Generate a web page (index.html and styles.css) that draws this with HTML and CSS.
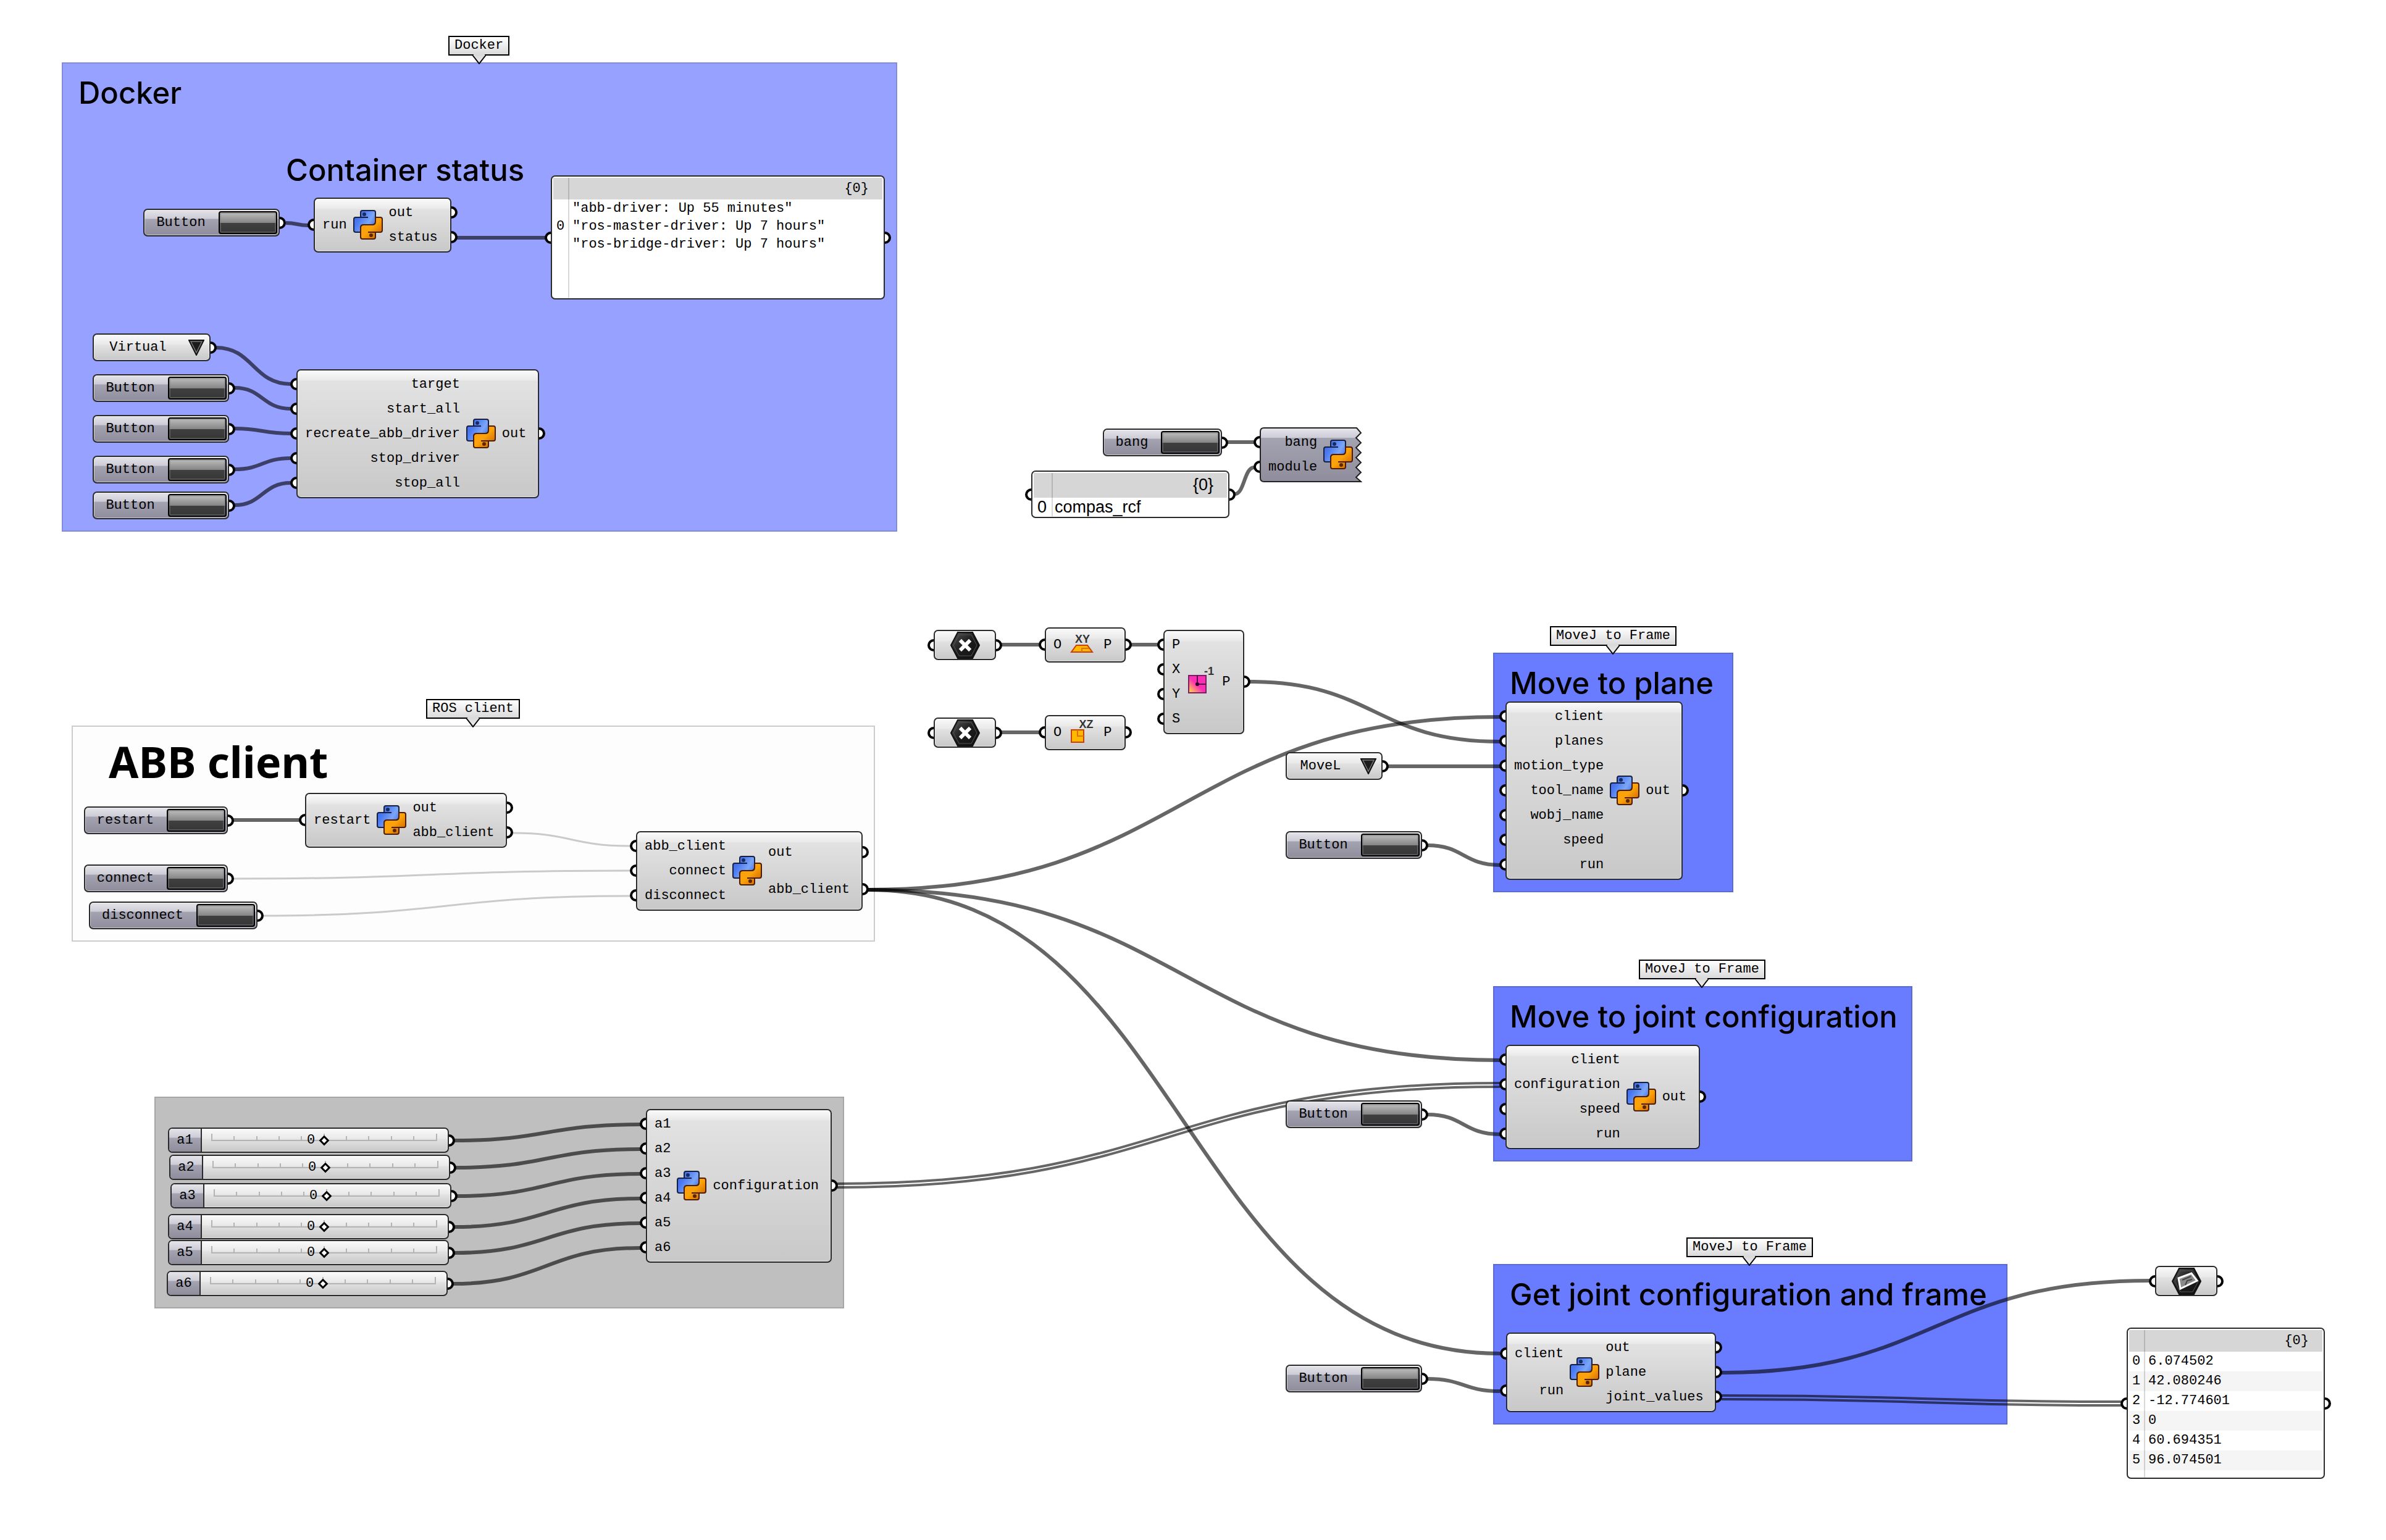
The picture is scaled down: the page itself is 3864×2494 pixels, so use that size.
FILE: index.html
```html
<!DOCTYPE html>
<html lang="en">
<head>
<meta charset="utf-8">
<title>ABB robot control definition</title>
<link rel="stylesheet" href="styles.css">
</head>
<body>
<svg class="defs" aria-hidden="true">
  <defs>
    <linearGradient id="blue" x1="0" y1="0" x2="1" y2="0.6"><stop offset="0" stop-color="#3e63e6"/><stop offset="0.35" stop-color="#4a78f0"/><stop offset="0.75" stop-color="#7ba6f8"/><stop offset="1" stop-color="#4f7ce8"/></linearGradient>
    <linearGradient id="orange" x1="0" y1="0" x2="1" y2="1"><stop offset="0" stop-color="#ff9d0a"/><stop offset="0.5" stop-color="#fba30a"/><stop offset="1" stop-color="#c35400"/></linearGradient>
    <linearGradient id="dark" x1="0" y1="0" x2="1" y2="1"><stop offset="0" stop-color="#555"/><stop offset="0.5" stop-color="#1c1c1c"/><stop offset="1" stop-color="#111"/></linearGradient>
    <linearGradient id="magenta" x1="0" y1="1" x2="0.6" y2="0.4"><stop offset="0" stop-color="#ffe83a"/><stop offset="0.8" stop-color="#fb2fb4"/></linearGradient>
    <linearGradient id="lilac" x1="0" y1="0" x2="0" y2="1"><stop offset="0" stop-color="#e6e6ec"/><stop offset="0.18" stop-color="#cdccd6"/><stop offset="0.19" stop-color="#a4a3b1"/><stop offset="1" stop-color="#8f8d9b"/></linearGradient>
    <linearGradient id="tip" x1="0" y1="0" x2="0" y2="1"><stop offset="0" stop-color="#dadada"/><stop offset="1" stop-color="#eee"/></linearGradient>
  </defs>
  <symbol id="python" viewBox="0 0 48 48">
    <path d="M12 36H4q-3 0-3-3V15q0-3 3-3h8V4q0-3 3-3h18q3 0 3 3v15q0 5-5 5H17q-5 0-5 5z" fill="url(#blue)" stroke="#17203f" stroke-width="2" stroke-linejoin="round"/>
    <path d="M12 12h12" stroke="#17203f" stroke-width="2"/>
    <path d="M36 12h8q3 0 3 3v18q0 3-3 3h-8v8q0 3-3 3H15q-3 0-3-3V29q0-5 5-5h14q5 0 5-5z" fill="url(#orange)" stroke="#4d1c05" stroke-width="2" stroke-linejoin="round"/>
    <path d="M36 36H24" stroke="#4d1c05" stroke-width="2"/>
    <circle cx="18" cy="7" r="3" fill="#1b2a5c"/><circle cx="29" cy="41" r="3" fill="#5a2604"/>
  </symbol>
  <symbol id="point" viewBox="0 0 48 44">
    <path d="M1 22 12 1h24l11 21-11 21H12z" fill="url(#dark)" stroke="#111" stroke-width="2"/>
    <path d="M5 22 14 5h20l9 17-9 17H14z" fill="none" stroke="#555" stroke-width="1"/>
    <path d="M18 16l12 12M30 16 18 28" stroke="#fff" stroke-width="6" stroke-linecap="square"/>
  </symbol>
  <symbol id="planeparam" viewBox="0 0 48 44">
    <path d="M1 22 12 1h24l11 21-11 21H12z" fill="url(#dark)" stroke="#111" stroke-width="2"/>
    <path d="M5 22 14 5h20l9 17-9 17H14z" fill="none" stroke="#555" stroke-width="1"/>
    <path d="M11 17 32 9l9 12-27 13z" fill="#8a8a8a" stroke="#fff" stroke-width="3"/>
    <path d="M17 20l14-6M22 28l3-7 8-2" fill="none" stroke="#444" stroke-width="2"/>
  </symbol>
  <symbol id="ruler" viewBox="0 0 366 24">
    <path d="M0 12H366M1 1v11M37 5v7M74 5v7M110 5v7M146 5v7M183 1v11M219 5v7M255 5v7M292 5v7M328 5v7M365 1v11" fill="none" stroke="#b4b4b4" stroke-width="2"/>
  </symbol>
  <symbol id="arrow" viewBox="0 0 26 26">
    <path d="M1 1h24L13 25z" fill="#1c1c1c" stroke="#111" stroke-width="2"/>
    <path d="M4 3h18l-9 18z" fill="none" stroke="#777" stroke-width="1.5"/>
  </symbol>
  <symbol id="tail" viewBox="0 0 22 16">
    <path d="M0 1 11 15 22 1" fill="url(#tip)" stroke="#000" stroke-width="2"/>
    <path d="M2 1h18" stroke="#dadada" stroke-width="3"/>
  </symbol>
</svg>

<main class="canvas">
  <section class="group docker" id="g-docker"><h2>Docker</h2></section>
  <section class="group client" id="g-client"><h1>ABB client</h1></section>
  <section class="group grey" id="g-axes"></section>
  <section class="group move" id="g-plane"><h2>Move to plane</h2></section>
  <section class="group move" id="g-joint"><h2>Move to joint configuration</h2></section>
  <section class="group move" id="g-get"><h2>Get joint configuration and frame</h2></section>
  <h2 id="status-title">Container status</h2>

  <svg class="wires" aria-hidden="true">
    <g class="wire">
      <path d="M463 361C481 361 481 365 499 365"/>
      <path d="M740 385H883"/>
      <path d="M350 563C410 563 410 622 471 622"/>
      <path d="M380 628C425 628 425 662 471 662"/>
      <path d="M380 694C425 694 425 702 471 702"/>
      <path d="M380 760C425 760 425 742 471 742"/>
      <path d="M380 818C425 818 425 782 471 782"/>
      <path d="M1988 716H2031"/>
      <path d="M2000 800C2015 800 2015 757 2031 757"/>
      <path d="M1622 1044H1683"/>
      <path d="M1622 1186H1683"/>
      <path d="M1832 1044H1875"/>
      <path d="M2024 1104C2226 1104 2226 1201 2429 1201"/>
      <path d="M2248 1241H2429"/>
      <path d="M2312 1369C2370 1369 2370 1401 2429 1401"/>
      <path d="M2312 1805C2370 1805 2370 1837 2429 1837"/>
      <path d="M2312 2233C2370 2233 2370 2253 2429 2253"/>
      <path d="M378 1328H486"/>
      <path d="M1406 1441C1917 1441 1917 1161 2429 1161"/>
      <path d="M1406 1441C1917 1441 1917 1717 2429 1717"/>
      <path d="M1406 1441C1917 1441 1917 2192 2429 2192"/>
      <path d="M736 1847C886 1847 886 1821 1037 1821"/>
      <path d="M738 1891C887 1891 887 1861 1037 1861"/>
      <path d="M740 1937C888 1937 888 1901 1037 1901"/>
      <path d="M736 1987C886 1987 886 1941 1037 1941"/>
      <path d="M736 2029C886 2029 886 1981 1037 1981"/>
      <path d="M734 2079C885 2079 885 2021 1037 2021"/>
      <path d="M2788 2223C3134 2223 3134 2074 3481 2074"/>
    </g>
    <g class="wire list">
      <path d="M1356 1917C1892 1917 1892 1754 2429 1754"/>
      <path d="M1356 1923C1892 1923 1892 1760 2429 1760"/>
      <path d="M2788 2260C3111 2260 3111 2270 3435 2270"/>
      <path d="M2788 2266C3111 2266 3111 2276 3435 2276"/>
    </g>
    <g class="wire empty">
      <path d="M830 1349C925 1349 925 1370 1021 1370"/>
      <path d="M378 1423C699 1423 699 1410 1021 1410"/>
      <path d="M426 1483C723 1483 723 1451 1021 1451"/>
    </g>
  </svg>

  <div class="tag" id="t-docker"><span>Docker</span><svg><use href="#tail"/></svg></div>
  <div class="tag" id="t-ros"><span>ROS client</span><svg><use href="#tail"/></svg></div>
  <div class="tag" id="t-plane"><span>MoveJ to Frame</span><svg><use href="#tail"/></svg></div>
  <div class="tag" id="t-joint"><span>MoveJ to Frame</span><svg><use href="#tail"/></svg></div>
  <div class="tag" id="t-get"><span>MoveJ to Frame</span><svg><use href="#tail"/></svg></div>

  <div class="box trigger out" id="b-status"><span id="l-status">Button</span><button type="button" aria-labelledby="l-status"></button></div>
  <div class="box node" id="n-status">
    <ul class="inputs"><li>run</li></ul><svg class="icon"><use href="#python"/></svg><ul class="outputs"><li>out</li><li>status</li></ul>
  </div>
  <div class="box panel in out" id="p-status">
    <table>
      <thead><tr><th></th><th>{0}</th></tr></thead>
      <tbody><tr><td>0</td><td>"abb-driver: Up 55 minutes"<br>"ros-master-driver: Up 7 hours"<br>"ros-bridge-driver: Up 7 hours"</td></tr></tbody>
    </table>
  </div>

  <div class="box dropdown out" id="s-target"><select aria-label="target"><option>Virtual</option></select><svg><use href="#arrow"/></svg></div>
  <div class="box trigger out" id="b-start"><span id="l-start">Button</span><button type="button" aria-labelledby="l-start"></button></div>
  <div class="box trigger out" id="b-recreate"><span id="l-recreate">Button</span><button type="button" aria-labelledby="l-recreate"></button></div>
  <div class="box trigger out" id="b-stopdriver"><span id="l-stopdriver">Button</span><button type="button" aria-labelledby="l-stopdriver"></button></div>
  <div class="box trigger out" id="b-stopall"><span id="l-stopall">Button</span><button type="button" aria-labelledby="l-stopall"></button></div>
  <div class="box node" id="n-docker">
    <ul class="inputs"><li>target</li><li>start_all</li><li>recreate_abb_driver</li><li>stop_driver</li><li>stop_all</li></ul><svg class="icon"><use href="#python"/></svg><ul class="outputs"><li>out</li></ul>
  </div>

  <div class="box trigger out" id="b-bang"><span id="l-bang">bang</span><button type="button" aria-labelledby="l-bang"></button></div>
  <div class="box panel in out sans" id="p-module">
    <table>
      <thead><tr><th></th><th>{0}</th></tr></thead>
      <tbody><tr><td>0</td><td>compas_rcf</td></tr></tbody>
    </table>
  </div>
  <div class="box node torn" id="n-bang">
    <svg class="shape" viewBox="0 0 166 89"><path d="M7 1H157L164 9 156 17 164 25 156 33 164 41 156 49 164 57 156 65 164 73 156 81 164 88H7Q1 88 1 82V7Q1 1 7 1Z" fill="url(#lilac)" stroke="#222" stroke-width="2"/></svg>
    <ul class="inputs"><li>bang</li><li>module</li></ul><svg class="icon"><use href="#python"/></svg>
  </div>

  <div class="box param in out" id="a-point1"><svg><use href="#point"/></svg></div>
  <div class="box param in out" id="a-point2"><svg><use href="#point"/></svg></div>
  <div class="box node" id="n-xy">
    <ul class="inputs"><li>O</li></ul>
    <svg class="icon" viewBox="0 0 48 48">
      <text x="24" y="21" text-anchor="middle" class="glyph">XY</text>
      <path d="M14 25h18l8 11H6z" fill="#ffb800" stroke="#c8400c" stroke-width="2"/>
      <path d="M23 36v-6h12" fill="none" stroke="#e0700c" stroke-width="2"/>
    </svg>
    <ul class="outputs"><li>P</li></ul>
  </div>
  <div class="box node" id="n-xz">
    <ul class="inputs"><li>O</li></ul>
    <svg class="icon" viewBox="0 0 48 48">
      <text x="30" y="17" text-anchor="middle" class="glyph">XZ</text>
      <path d="M6 20h20v20H6z" fill="#ffb800" stroke="#c8400c" stroke-width="2"/>
      <path d="M16 20v10h10" fill="none" stroke="#e0700c" stroke-width="2"/>
    </svg>
    <ul class="outputs"><li>P</li></ul>
  </div>
  <div class="box node" id="n-rotate">
    <ul class="inputs"><li>P</li><li>X</li><li>Y</li><li>S</li></ul>
    <svg class="icon" viewBox="0 0 48 48">
      <path d="M4 14h28v28H4z" fill="url(#magenta)" stroke="#7a1f63" stroke-width="2"/>
      <path d="M18 14v14h14" fill="none" stroke="#5a0f45" stroke-width="2"/>
      <circle cx="18" cy="28" r="3" fill="#300520"/>
      <text x="37" y="13" text-anchor="middle" class="glyph">-1</text>
    </svg>
    <ul class="outputs"><li>P</li></ul>
  </div>

  <div class="box trigger out" id="b-restart"><span id="l-restart">restart</span><button type="button" aria-labelledby="l-restart"></button></div>
  <div class="box trigger out" id="b-connect"><span id="l-connect">connect</span><button type="button" aria-labelledby="l-connect"></button></div>
  <div class="box trigger out" id="b-disconnect"><span id="l-disconnect">disconnect</span><button type="button" aria-labelledby="l-disconnect"></button></div>
  <div class="box node" id="n-restart">
    <ul class="inputs"><li>restart</li></ul><svg class="icon"><use href="#python"/></svg><ul class="outputs"><li>out</li><li>abb_client</li></ul>
  </div>
  <div class="box node" id="n-client">
    <ul class="inputs"><li>abb_client</li><li>connect</li><li>disconnect</li></ul><svg class="icon"><use href="#python"/></svg><ul class="outputs"><li>out</li><li>abb_client</li></ul>
  </div>

  <div class="box slider out" id="r-a1"><label for="a1">a1</label><div class="track"><svg><use href="#ruler"/></svg><output for="a1">0</output><input type="range" id="a1" min="-180" max="180" value="0"></div></div>
  <div class="box slider out" id="r-a2"><label for="a2">a2</label><div class="track"><svg><use href="#ruler"/></svg><output for="a2">0</output><input type="range" id="a2" min="-180" max="180" value="0"></div></div>
  <div class="box slider out" id="r-a3"><label for="a3">a3</label><div class="track"><svg><use href="#ruler"/></svg><output for="a3">0</output><input type="range" id="a3" min="-180" max="180" value="0"></div></div>
  <div class="box slider out" id="r-a4"><label for="a4">a4</label><div class="track"><svg><use href="#ruler"/></svg><output for="a4">0</output><input type="range" id="a4" min="-180" max="180" value="0"></div></div>
  <div class="box slider out" id="r-a5"><label for="a5">a5</label><div class="track"><svg><use href="#ruler"/></svg><output for="a5">0</output><input type="range" id="a5" min="-180" max="180" value="0"></div></div>
  <div class="box slider out" id="r-a6"><label for="a6">a6</label><div class="track"><svg><use href="#ruler"/></svg><output for="a6">0</output><input type="range" id="a6" min="-180" max="180" value="0"></div></div>
  <div class="box node" id="n-config">
    <ul class="inputs"><li>a1</li><li>a2</li><li>a3</li><li>a4</li><li>a5</li><li>a6</li></ul><svg class="icon"><use href="#python"/></svg><ul class="outputs"><li>configuration</li></ul>
  </div>

  <div class="box dropdown out" id="s-motion"><select aria-label="motion_type"><option>MoveL</option></select><svg><use href="#arrow"/></svg></div>
  <div class="box trigger out" id="b-plane"><span id="l-plane">Button</span><button type="button" aria-labelledby="l-plane"></button></div>
  <div class="box node" id="n-plane">
    <ul class="inputs"><li>client</li><li>planes</li><li>motion_type</li><li>tool_name</li><li>wobj_name</li><li>speed</li><li>run</li></ul><svg class="icon"><use href="#python"/></svg><ul class="outputs"><li>out</li></ul>
  </div>

  <div class="box trigger out" id="b-joint"><span id="l-joint">Button</span><button type="button" aria-labelledby="l-joint"></button></div>
  <div class="box node" id="n-joint">
    <ul class="inputs"><li>client</li><li>configuration</li><li>speed</li><li>run</li></ul><svg class="icon"><use href="#python"/></svg><ul class="outputs"><li>out</li></ul>
  </div>

  <div class="box trigger out" id="b-get"><span id="l-get">Button</span><button type="button" aria-labelledby="l-get"></button></div>
  <div class="box node" id="n-get">
    <ul class="inputs"><li>client</li><li>run</li></ul><svg class="icon"><use href="#python"/></svg><ul class="outputs"><li>out</li><li>plane</li><li>joint_values</li></ul>
  </div>

  <div class="box param in out" id="a-plane"><svg><use href="#planeparam"/></svg></div>
  <div class="box panel in out striped" id="p-joints">
    <table>
      <thead><tr><th></th><th>{0}</th></tr></thead>
      <tbody>
        <tr><td>0</td><td>6.074502</td></tr>
        <tr><td>1</td><td>42.080246</td></tr>
        <tr><td>2</td><td>-12.774601</td></tr>
        <tr><td>3</td><td>0</td></tr>
        <tr><td>4</td><td>60.694351</td></tr>
        <tr><td>5</td><td>96.074501</td></tr>
      </tbody>
    </table>
  </div>
</main>
</body>
</html>
```
FILE: styles.css
```css
*, *::before, *::after { box-sizing: border-box; }

body {
  margin: 0;
  background: #fff;
  color: #000;
  font: 22px/28px "Liberation Mono", monospace;
}

.defs { position: absolute; width: 0; height: 0; }
.glyph { font: 700 18px "Liberation Sans", sans-serif; fill: #333; }

.canvas {
  position: relative;
  min-height: 100vh;
  overflow: hidden;
}

/* groups and headings */
.group { position: absolute; padding: 18px 25px; border: 2px solid; }
.docker { background: #97a1ff; border-color: #828bdc; }
.move { background: #697cff; border-color: #5a6ad2; }
.grey { background: #bfbfbf; border-color: #a6a6a6; }
.client { background: #fdfdfd; border-color: #ccc; padding: 8px 58px; }

h1, h2 { margin: 0; white-space: nowrap; }
h1 { font: 700 70px/96px "Noto Sans", sans-serif; }
h2 { font: 500 49px/60px Inter, "Liberation Sans", sans-serif; }
#status-title { position: absolute; left: 463px; top: 246px; }

/* wires */
.wires { position: absolute; left: 0; top: 0; width: 100%; height: 100%; }
.wire path { fill: none; stroke: rgba(0, 0, 0, 0.6); stroke-width: 6; }
.list path { stroke-width: 4; }
.empty path { stroke: rgba(0, 0, 0, 0.2); stroke-width: 3; }

/* callout tags */
.tag { position: absolute; display: flex; flex-direction: column; align-items: center; }
.tag span {
  padding: 0 8px;
  border: 2px solid #000;
  background: linear-gradient(#fff, #dadada);
  white-space: nowrap;
}
.tag svg { width: 22px; height: 16px; margin-top: -2px; }

/* every object on the canvas */
.box {
  position: absolute;
  display: flex;
  border: 2px solid #2a2a2a;
  border-radius: 7px;
  background: linear-gradient(#fafafa, #e9e9e9 16px, #e2e2e2 17px, #c8c8c8);
  box-shadow: inset 0 0 0 1px rgba(255, 255, 255, 0.5);
}

/* connection grips */
.in::before, .out::after, .inputs li::before, .outputs li::after {
  content: "";
  position: absolute;
  top: calc(50% - 10px);
  width: 10px;
  height: 20px;
  border: 4px solid #000;
  background: #fff;
}
.in::before, .inputs li::before { left: -12px; border-right: 0; border-radius: 10px 0 0 10px; }
.out::after, .outputs li::after { right: -12px; border-left: 0; border-radius: 0 10px 10px 0; }

/* components */
.node { padding: 2px 0 3px; gap: 10px; align-items: stretch; }
.node ul { display: flex; flex-direction: column; margin: 0; padding: 0; list-style: none; }
.node li {
  position: relative;
  flex: 1;
  display: flex;
  align-items: center;
  min-height: 40px;
  padding-top: 2px;
}
.inputs li { justify-content: flex-end; padding-left: 12px; }
.node .outputs { flex: 1; }
.icon { position: relative; flex: none; width: 48px; height: 48px; align-self: center; overflow: visible; }
.torn { border-color: transparent; background: none; box-shadow: none; }
.shape { position: absolute; left: -2px; top: -2px; width: 166px; height: 89px; }

/* button objects */
.trigger, .slider label {
  background: linear-gradient(#e4e4ea, #cdccd6 14px, #a4a3b1 15px, #8f8d9b);
}
.trigger { height: 45px; padding: 2px; align-items: center; }
.trigger span { flex: 1; padding-right: 4px; text-align: center; }
.trigger button {
  width: 95px;
  height: 37px;
  padding: 0;
  border: 2px solid #000;
  border-radius: 4px;
  background: linear-gradient(#bdbdbd, #868686 50%, #404040 51%, #363636);
  box-shadow: inset 0 0 0 2px rgba(120, 120, 120, 0.5);
}

/* value lists */
.dropdown { height: 45px; align-items: center; }
.dropdown select {
  flex: 1;
  width: 0;
  padding: 0;
  border: 0;
  background: none;
  appearance: none;
  color: #000;
  font: inherit;
  text-align: center;
  text-align-last: center;
}
.dropdown svg { width: 26px; height: 26px; margin: 0 8px 0 10px; }

/* parameters */
.param { width: 101px; height: 49px; align-items: center; justify-content: center; }
.param svg { width: 48px; height: 44px; }

/* sliders */
.slider { width: 455px; height: 41px; }
.slider label {
  width: 53px;
  border-right: 2px solid #2a2a2a;
  border-radius: 5px 0 0 5px;
  line-height: 37px;
  text-align: center;
}
.track { display: grid; width: 366px; margin-left: 15px; align-items: center; }
.track > * { grid-area: 1 / 1; }
.track svg { width: 366px; height: 24px; }
.track output { padding-left: 155px; }
.track input {
  width: 366px;
  height: 20px;
  margin: 0;
  appearance: none;
  background: none;
}
.track input::-webkit-slider-thumb {
  appearance: none;
  box-sizing: border-box;
  width: 12px;
  height: 12px;
  border: 3px solid #000;
  background: #fff;
  transform: rotate(45deg);
}

/* panels */
.panel {
  display: block;
  padding: 2px;
  background: linear-gradient(#d8d8d8, #d8d8d8) 26px 2px / 2px 100% no-repeat #fff;
}
.panel table { width: 100%; border-collapse: collapse; }
.panel th, .panel td { padding: 0; text-align: left; font-weight: 400; }
.panel th { height: 35px; background: rgba(0, 0, 0, 0.16); }
.panel th:last-child { padding-right: 22px; text-align: right; }
.panel th:first-child, .panel td:first-child { width: 31px; padding-left: 5px; }
.panel td { line-height: 29px; }
.striped td { line-height: 32px; }
.striped tr:nth-child(even) td { background: rgba(0, 0, 0, 0.04); }
.sans { font: 27px/30px "Liberation Sans", sans-serif; background-position: 31px 2px; }
.sans th { height: 40px; padding-bottom: 2px; }
.sans th:first-child, .sans td:first-child { width: 34px; padding-left: 6px; }
.sans td { line-height: 30px; }

/* placement on the canvas */
#g-docker { left: 100px; top: 101px; width: 1353px; height: 760px; }
#g-client { left: 116px; top: 1175px; width: 1301px; height: 350px; }
#g-axes { left: 250px; top: 1776px; width: 1117px; height: 343px; }
#g-plane { left: 2418px; top: 1057px; width: 389px; height: 388px; }
#g-joint { left: 2418px; top: 1597px; width: 679px; height: 284px; }
#g-get { left: 2418px; top: 2047px; width: 833px; height: 260px; }

#t-docker { left: 726px; top: 58px; }
#t-ros { left: 690px; top: 1132px; }
#t-plane { left: 2510px; top: 1014px; }
#t-joint { left: 2654px; top: 1554px; }
#t-get { left: 2731px; top: 2004px; }

#b-status { left: 232px; top: 338px; width: 221px; }
#n-status { left: 508px; top: 320px; width: 223px; }
#p-status { left: 892px; top: 284px; width: 541px; height: 201px; }
#s-target { left: 150px; top: 540px; width: 191px; }
#b-start { left: 150px; top: 606px; width: 221px; }
#b-recreate { left: 150px; top: 672px; width: 221px; }
#b-stopdriver { left: 150px; top: 738px; width: 221px; }
#b-stopall { left: 150px; top: 796px; width: 221px; }
#n-docker { left: 480px; top: 598px; width: 393px; }

#b-bang { left: 1786px; top: 694px; width: 193px; }
#p-module { left: 1670px; top: 762px; width: 321px; height: 77px; }
#n-bang { left: 2040px; top: 692px; width: 166px; }

#a-point1 { left: 1512px; top: 1020px; }
#a-point2 { left: 1512px; top: 1162px; }
#n-xy { left: 1692px; top: 1016px; width: 131px; height: 57px; }
#n-xz { left: 1692px; top: 1158px; width: 131px; height: 57px; }
#n-rotate { left: 1884px; top: 1020px; width: 131px; }

#b-restart { left: 136px; top: 1306px; width: 233px; }
#b-connect { left: 136px; top: 1400px; width: 233px; }
#b-disconnect { left: 144px; top: 1460px; width: 273px; }
#n-restart { left: 494px; top: 1284px; width: 327px; }
#n-client { left: 1030px; top: 1346px; width: 367px; }

#r-a1 { left: 272px; top: 1826px; }
#r-a2 { left: 274px; top: 1870px; }
#r-a3 { left: 276px; top: 1916px; }
#r-a4 { left: 272px; top: 1966px; }
#r-a5 { left: 272px; top: 2008px; }
#r-a6 { left: 270px; top: 2058px; }
#n-config { left: 1046px; top: 1796px; width: 301px; }

#s-motion { left: 2082px; top: 1218px; width: 157px; }
#b-plane { left: 2082px; top: 1346px; width: 221px; }
#n-plane { left: 2438px; top: 1136px; width: 287px; }
#b-joint { left: 2082px; top: 1782px; width: 221px; }
#n-joint { left: 2438px; top: 1692px; width: 315px; }
#b-get { left: 2082px; top: 2210px; width: 221px; }
#n-get { left: 2439px; top: 2158px; width: 340px; }

#a-plane { left: 3490px; top: 2050px; }
#p-joints { left: 3444px; top: 2150px; width: 321px; height: 245px; }
```
